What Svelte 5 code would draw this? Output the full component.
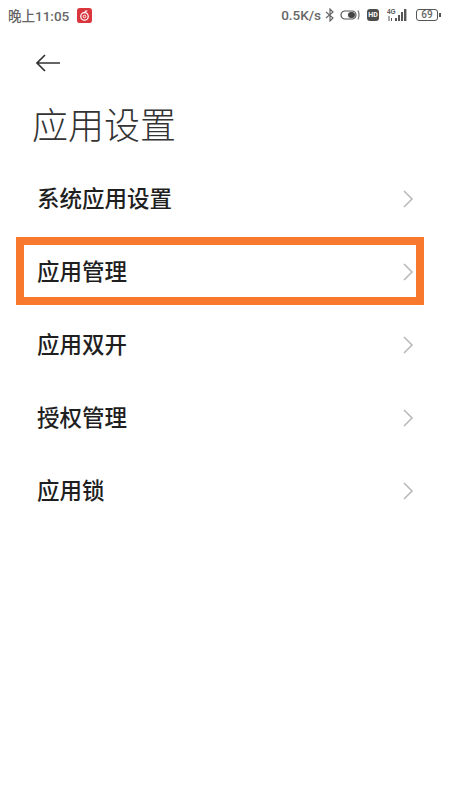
<script>
  const rows = [
    { label: "系统应用设置" },
    { label: "应用管理", marked: true },
    { label: "应用双开" },
    { label: "授权管理" },
    { label: "应用锁" },
  ];
</script>

<div class="page">
  <header class="status">
    <div class="left">
      <span>晚上11:05</span>
      <svg class="app" width="15" height="15" viewBox="0 0 16 16">
        <rect width="16" height="16" rx="3" fill="#d9363e" />
        <circle cx="8" cy="9" r="4" fill="none" stroke="#fff" stroke-width="1.3" />
        <circle cx="8" cy="9" r="1.4" fill="none" stroke="#fff" stroke-width="1" />
        <path d="M8 5 Q8.5 3 11 3" fill="none" stroke="#fff" stroke-width="1.2" />
      </svg>
    </div>
    <div class="right">
      <span>0.5K/s</span>
      <svg class="bt" width="10" height="14" viewBox="0 0 10 14" fill="none" stroke="#666" stroke-width="1.2">
        <path d="M1 4l7 6-3 3V1l3 3-7 6" />
      </svg>
      <svg class="ear" width="21" height="14" viewBox="0 0 21 14">
        <rect x="1" y="3" width="15" height="8" rx="4" fill="none" stroke="#555" stroke-width="1.2" />
        <rect x="8" y="4" width="7" height="6" rx="3" fill="#444" />
        <path d="M18 2.5q2 4.5 0 9" fill="none" stroke="#777" stroke-width="1.2" />
      </svg>
      <span class="hd">HD</span>
      <svg class="signal" width="23" height="16" viewBox="0 0 23 16">
        <text x="0" y="6.5" font-size="6.5" font-family="Liberation Sans, sans-serif" font-weight="700" fill="#555">4G</text>
        <path d="M2 9v5M4.5 11v3" stroke="#555" stroke-width="1" />
        <rect x="8" y="11" width="2" height="3" fill="#555" />
        <rect x="11" y="8" width="2" height="6" fill="#555" />
        <rect x="14" y="5" width="2" height="9" fill="#555" />
        <rect x="17" y="2" width="2.4" height="12" fill="#555" />
      </svg>
      <div class="battery">
        <span class="level">69</span>
        <span class="tip"></span>
      </div>
    </div>
  </header>

  <button class="back" aria-label="返回">
    <svg width="26" height="20" viewBox="0 0 26 20" fill="none" stroke="#333" stroke-width="1.7">
      <path d="M25 10H2M10 2l-8 8 8 8" />
    </svg>
  </button>

  <h1>应用设置</h1>

  <ul>
    {#each rows as row}
      <li class:marked={row.marked}>
        <span class="label">{row.label}</span>
        <svg width="12" height="20" viewBox="0 0 12 20" fill="none" stroke="#b9b9b9" stroke-width="1.6">
          <path d="M2 2l8 8-8 8" />
        </svg>
      </li>
    {/each}
  </ul>
</div>

<style>
  :global(body) {
    margin: 0;
    background: #fff;
  }

  .page {
    width: 450px;
    height: 800px;
    overflow: hidden;
    background: #fff;
    font-family: "Noto Sans CJK SC", "Liberation Sans", sans-serif;
  }

  .status {
    height: 30px;
    padding: 0 9px 0 8px;
    display: flex;
    align-items: center;
    justify-content: space-between;
    color: #666;
    font-size: 13.5px;
    font-weight: 500;
    font-family: "Roboto", "Noto Sans CJK SC", sans-serif;
  }

  .left,
  .right {
    display: flex;
    align-items: center;
  }

  .left {
    gap: 8px;
  }

  .right svg {
    display: block;
  }

  .bt {
    margin-left: 4px;
  }

  .ear {
    margin-left: 5px;
  }

  .hd {
    width: 12px;
    height: 12px;
    margin-left: 6px;
    border-radius: 3px;
    background: #4d4d4d;
    color: #fff;
    font-size: 7px;
    font-weight: 700;
    line-height: 12px;
    text-align: center;
  }

  .signal {
    margin-left: 8px;
  }

  .battery {
    display: flex;
    align-items: center;
    margin-left: 6px;
  }

  .level {
    width: 20px;
    height: 10px;
    border: 1.3px solid #555;
    border-radius: 3px;
    font-size: 10px;
    font-weight: 500;
    line-height: 10px;
    text-align: center;
  }

  .tip {
    width: 2px;
    height: 4px;
    margin-left: 1px;
    background: #555;
  }

  .back {
    display: block;
    margin: 23px 0 0 35px;
    padding: 0;
    border: 0;
    height: 20px;
    background: none;
  }

  .back svg {
    display: block;
  }

  h1 {
    margin: 23px 0 0 32px;
    color: #333;
    font-size: 36px;
    font-weight: 300;
    line-height: 54px;
    letter-spacing: 0;
  }

  ul {
    list-style: none;
    margin: 12px 0 0;
    padding: 0;
  }

  li {
    position: relative;
    height: 73px;
    padding: 0 36px 0 37px;
    display: flex;
    align-items: center;
    justify-content: space-between;
    box-sizing: border-box;
  }

  .label {
    padding-bottom: 4px;
    color: #1f1f1f;
    font-size: 22.5px;
    font-weight: 500;
  }

  .marked::after {
    content: "";
    position: absolute;
    top: 2px;
    left: 16px;
    width: 408px;
    height: 68px;
    box-sizing: border-box;
    border: 8px solid #f8782d;
  }
</style>
